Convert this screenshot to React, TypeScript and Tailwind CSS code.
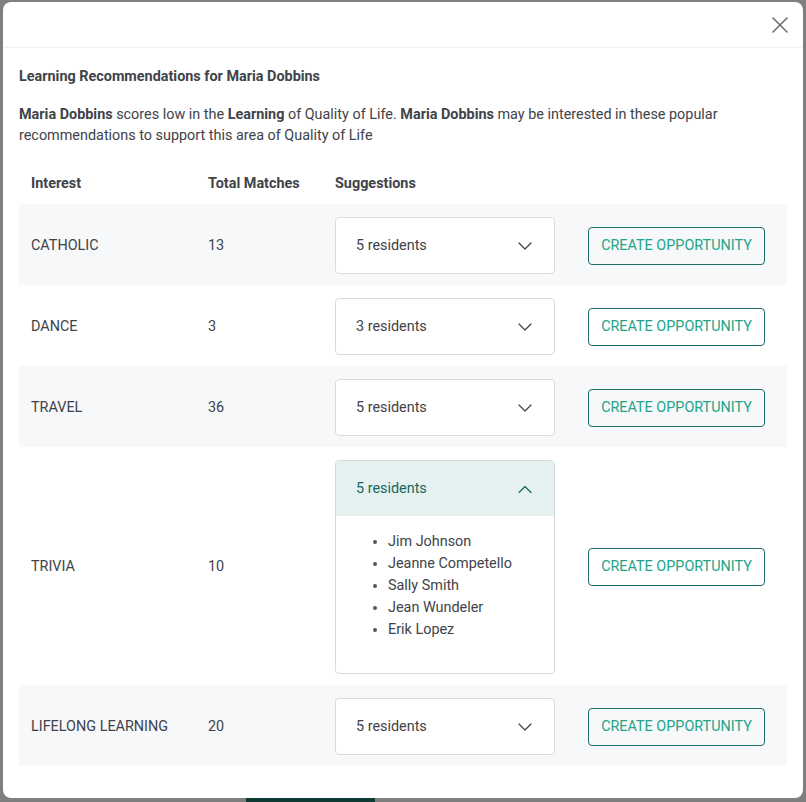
import React, { useState } from 'react';

type Row = {
  interest: string;
  total: number;
  count: number;
  names?: string[];
};

const rows: Row[] = [
  { interest: 'CATHOLIC', total: 13, count: 5 },
  { interest: 'DANCE', total: 3, count: 3 },
  { interest: 'TRAVEL', total: 36, count: 5 },
  {
    interest: 'TRIVIA',
    total: 10,
    count: 5,
    names: ['Jim Johnson', 'Jeanne Competello', 'Sally Smith', 'Jean Wundeler', 'Erik Lopez'],
  },
  { interest: 'LIFELONG LEARNING', total: 20, count: 5 },
];

const Chevron = ({ up }: { up?: boolean }) => (
  <svg width="14" height="8" viewBox="0 0 14 8" fill="none" className="shrink-0">
    <path
      d={up ? 'M1 7.5L7 1.5L13 7.5' : 'M1 1L7 7L13 1'}
      stroke={up ? '#17675e' : '#3c3f45'}
      strokeWidth="1.2"
      strokeLinecap="round"
      strokeLinejoin="round"
    />
  </svg>
);

const Suggestions = ({ row, open, onToggle }: { row: Row; open: boolean; onToggle: () => void }) => (
  <div className="w-[220px] rounded border border-[#d9dcdf] bg-white overflow-hidden">
    <button
      onClick={onToggle}
      className={`flex h-[55px] w-full items-center justify-between pl-5 pr-[22px] text-left ${open ? 'bg-[#e5f1f0] text-[#17675e]' : 'text-[#404349]'}`}
    >
      <span>{row.count} residents</span>
      <Chevron up={open} />
    </button>
    {open && row.names && (
      <ul className="h-[157px] list-disc pl-[52px] pt-[15px] leading-[22px] text-[#404349] marker:text-[#55585e]">
        {row.names.map((n) => (
          <li key={n}>{n}</li>
        ))}
      </ul>
    )}
  </div>
);

export default function App() {
  const [openRow, setOpenRow] = useState<string | null>('TRIVIA');

  return (
    <div
      className="h-[802px] w-[806px] overflow-hidden bg-[#7f7f7f] px-[3px] pt-[2px] text-[14.4px] text-[#404349]"
      style={{ fontFamily: 'Roboto, "Liberation Sans", sans-serif' }}
    >
      {/* Modal */}
      <div className="h-[796px] rounded-lg bg-white">
        <div className="flex h-[46px] items-center justify-end border-b border-[#f0f1f3] pr-[11px]">
          <button aria-label="Close" className="p-1">
            <svg width="16" height="16" viewBox="0 0 16 16" fill="none">
              <path d="M1 1L15 15M15 1L1 15" stroke="#707070" strokeWidth="1.6" strokeLinecap="round" />
            </svg>
          </button>
        </div>

        <div className="px-4 pt-[19px]">
          <h2 className="font-bold leading-5">Learning Recommendations for Maria Dobbins</h2>
          <p className="mt-[17px] leading-[21px]">
            <span className="font-bold">Maria Dobbins</span> scores low in the{' '}
            <span className="font-bold">Learning</span> of Quality of Life.{' '}
            <span className="font-bold">Maria Dobbins</span> may be interested in these popular
            recommendations to support this area of Quality of Life
          </p>

          <div className="mt-[17px] w-[768px]">
            <div className="flex h-[41px] items-center font-bold">
              <div className="w-[177px] px-3">Interest</div>
              <div className="w-[127px] px-3">Total Matches</div>
              <div className="px-3">Suggestions</div>
            </div>

            {rows.map((row, i) => (
              <div
                key={row.interest}
                className={`flex items-center pt-[13px] pb-[11px] ${i % 2 === 0 ? 'bg-[#f7f8fa]' : 'bg-white'}`}
              >
                <div className="w-[177px] px-3">{row.interest}</div>
                <div className="w-[127px] px-3">{row.total}</div>
                <div className="px-3">
                  <Suggestions
                    row={row}
                    open={openRow === row.interest}
                    onToggle={() => setOpenRow(openRow === row.interest ? null : row.interest)}
                  />
                </div>
                <button className="ml-[21px] h-[38px] w-[177px] rounded border border-[#1b6e65] text-[#22a488]">
                  CREATE OPPORTUNITY
                </button>
              </div>
            ))}
          </div>
        </div>
      </div>

      {/* Page behind the overlay */}
      <div className="flex pl-[243px]">
        <div className="h-[8px] w-[129px] bg-[#0f3b36]" />
      </div>
    </div>
  );
}
